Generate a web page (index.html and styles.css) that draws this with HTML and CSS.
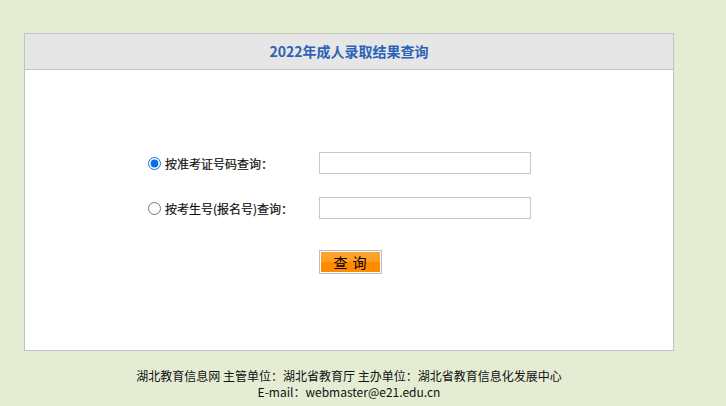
FILE: index.html
```html
<!DOCTYPE html>
<html lang="zh-CN">
<head>
<meta charset="utf-8">
<title>2022年成人录取结果查询</title>
<link rel="stylesheet" href="styles.css">
</head>
<body>
<div class="box">
  <div class="box-head">2022年成人录取结果查询</div>
  <form class="box-body">
    <div class="row">
      <label class="opt"><input type="radio" name="t" checked><span>按准考证号码查询：</span></label>
      <input class="field" type="text">
    </div>
    <div class="row">
      <label class="opt"><input type="radio" name="t"><span>按考生号(报名号)查询：</span></label>
      <input class="field" type="text">
    </div>
    <div class="row btn-row">
      <span class="opt"></span>
      <button type="button" class="btn"><span>查&nbsp;询</span></button>
    </div>
  </form>
</div>
<div class="footer">
  <div>湖北教育信息网 主管单位：湖北省教育厅 主办单位：湖北省教育信息化发展中心</div>
  <div>E-mail：webmaster@e21.edu.cn</div>
</div>
</body>
</html>
```
FILE: styles.css
```css
html, body {
  margin: 0;
  padding: 0;
}
body {
  background: #e4ecd3;
  font-family: "Noto Sans CJK SC", "Noto Sans", sans-serif;
  font-size: 12px;
  color: #000;
  padding-top: 33px;
}
.box {
  margin-left: 24px;
  width: 648px;
  border: 1px solid #c3c3c3;
  background: #fff;
}
.box-head {
  height: 35px;
  line-height: 35px;
  background: #e6e6e6;
  border-bottom: 1px solid #c3c3c3;
  text-align: center;
  color: #2a63b5;
  font-weight: bold;
  font-size: 14px;
}
.box-body {
  margin: 0;
  padding: 82px 0 0 0;
  height: 198px;
}
.row {
  display: flex;
  align-items: center;
  height: 22px;
  margin-bottom: 23px;
}
.btn-row {
  margin-top: 31px;
  height: 24px;
}
.opt {
  display: flex;
  align-items: center;
  width: 294px;
  padding-left: 123px;
  box-sizing: border-box;
}
.opt input {
  margin: 0 4px 0 0;
  width: 13px;
  height: 13px;
  accent-color: #0a6fe0;
}
.opt span {
  color: #111;
  -webkit-text-stroke: 0.2px #111;
}
.field {
  width: 212px;
  height: 22px;
  box-sizing: border-box;
  border: 1px solid #c8c8c8;
  padding: 0 4px;
  margin: 0;
  font-size: 12px;
}
.btn {
  width: 63px;
  height: 24px;
  padding: 1px;
  margin: 0;
  box-sizing: border-box;
  border: 1px solid #bdbdbd;
  background: #fff;
  cursor: pointer;
}
.btn span {
  display: block;
  height: 100%;
  line-height: 20px;
  background: linear-gradient(#ffa432 0%, #ff9c22 48%, #ff8a00 52%, #ff8c00 100%);
  font-family: "Noto Sans CJK SC", sans-serif;
  font-size: 14px;
  color: #000;
  letter-spacing: 1px;
}
.footer {
  margin-left: 24px;
  width: 650px;
  padding-top: 17px;
  text-align: center;
  line-height: 16px;
  font-size: 12px;
  color: #111;
}
```
